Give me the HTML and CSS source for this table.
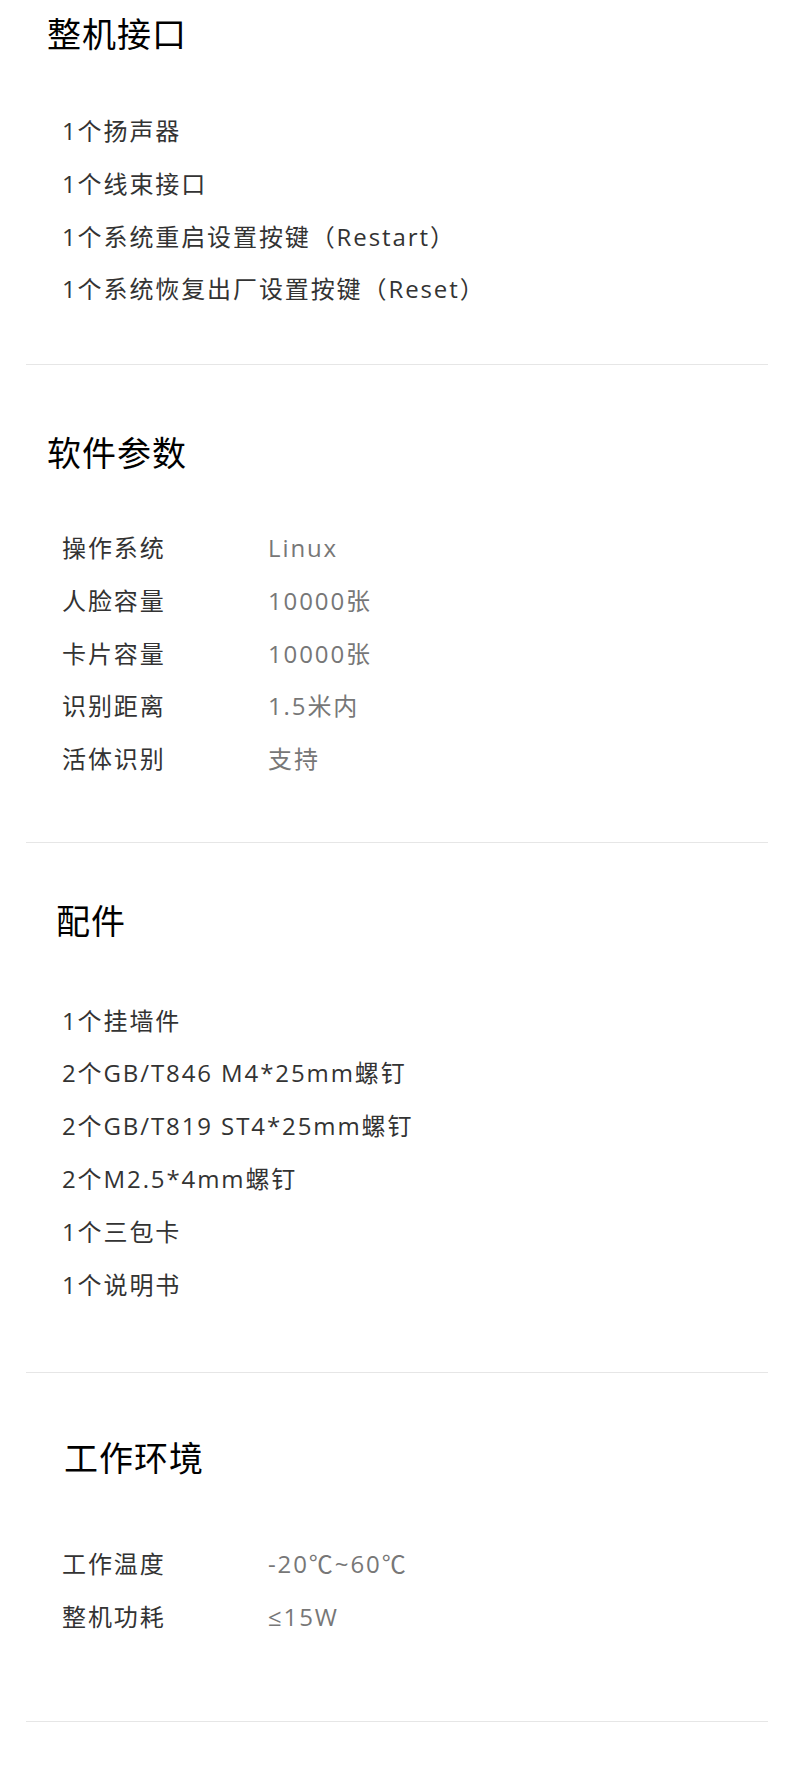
FILE: index.html
```html
<!DOCTYPE html>
<html lang="zh-CN">
<head>
<meta charset="utf-8">
<title>参数</title>
<link rel="stylesheet" href="styles.css">
</head>
<body>
<div class="page">
  <section class="spec spec-ports">
    <h2 class="spec-title">整机接口</h2>
    <ul class="spec-list">
      <li>1个扬声器</li>
      <li>1个线束接口</li>
      <li>1个系统重启设置按键（Restart）</li>
      <li>1个系统恢复出厂设置按键（Reset）</li>
    </ul>
  </section>
  <section class="spec spec-software">
    <h2 class="spec-title">软件参数</h2>
    <dl class="spec-table">
      <div class="spec-row"><dt>操作系统</dt><dd>Linux</dd></div>
      <div class="spec-row"><dt>人脸容量</dt><dd>10000张</dd></div>
      <div class="spec-row"><dt>卡片容量</dt><dd>10000张</dd></div>
      <div class="spec-row"><dt>识别距离</dt><dd>1.5米内</dd></div>
      <div class="spec-row"><dt>活体识别</dt><dd>支持</dd></div>
    </dl>
  </section>
  <section class="spec spec-accessories">
    <h2 class="spec-title">配件</h2>
    <ul class="spec-list">
      <li>1个挂墙件</li>
      <li>2个GB/T846 M4*25mm螺钉</li>
      <li>2个GB/T819 ST4*25mm螺钉</li>
      <li>2个M2.5*4mm螺钉</li>
      <li>1个三包卡</li>
      <li>1个说明书</li>
    </ul>
  </section>
  <section class="spec spec-env">
    <h2 class="spec-title">工作环境</h2>
    <dl class="spec-table">
      <div class="spec-row"><dt>工作温度</dt><dd>-20℃~60℃</dd></div>
      <div class="spec-row"><dt>整机功耗</dt><dd>≤15W</dd></div>
    </dl>
  </section>
</div>
</body>
</html>
```

FILE: styles.css
```css
* {
  box-sizing: border-box;
}

html, body {
  margin: 0;
  padding: 0;
  background: #ffffff;
}

body {
  font-family: "Open Sans", "Noto Sans CJK SC", sans-serif;
  color: #333333;
}

.page {
  width: 790px;
  display: flex;
  flex-direction: column;
}

.spec {
  margin: 0 22px 0 26px;
  border-bottom: 1px solid #e6e6e6;
  display: flex;
  flex-direction: column;
}

.spec-title {
  margin: 0;
  font-family: "Noto Sans CJK SC", sans-serif;
  font-size: 34px;
  line-height: 48px;
  font-weight: 400;
  color: #000000;
  letter-spacing: 1px;
}

.spec-list,
.spec-table {
  margin: 0;
  padding: 0 0 0 36px;
  list-style: none;
}

.spec-list li,
.spec-row {
  font-size: 24px;
  line-height: 52.8px;
  height: 52.8px;
  letter-spacing: 1.9px;
  color: #333333;
  white-space: nowrap;
}

.spec-row {
  display: flex;
}

.spec-row dt {
  width: 206px;
  flex: none;
  margin: 0;
}

.spec-row dd {
  margin: 0;
  color: #777777;
}

/* section-specific spacing */
.spec-ports {
  padding: 8.5px 0 47.7px 0;
}
.spec-ports .spec-title {
  padding-left: 21px;
  margin-bottom: 48.6px;
}

.spec-software {
  padding: 63.5px 0 55.9px 0;
}
.spec-software .spec-title {
  padding-left: 21px;
  margin-bottom: 45.6px;
}

.spec-accessories {
  padding: 53.5px 0 60.6px 0;
}
.spec-accessories .spec-title {
  padding-left: 30px;
  margin-bottom: 50.1px;
}

.spec-env {
  padding: 60px 0 77.3px 0;
}
.spec-env .spec-title {
  padding-left: 38px;
  margin-bottom: 57.1px;
}
```
